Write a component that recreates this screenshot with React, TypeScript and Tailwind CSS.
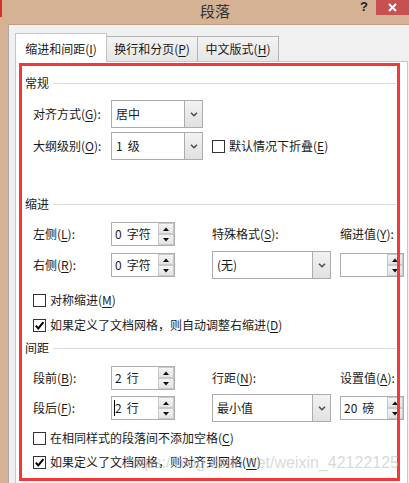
import React from "react";

// access-key letter, underlined like the Windows dialog
const K = ({ c }: { c: string }) => <span className="underline underline-offset-[2px]">{c}</span>;

function Lbl({ t, k, colon = true }: { t: string; k: string; colon?: boolean }) {
  return (
    <span className="whitespace-nowrap">
      {t}(<K c={k} />){colon ? ":" : ""}
    </span>
  );
}

// number + unit, with the wider gap the dialog font gives
function Val({ n, u }: { n: string; u: string }) {
  return (
    <span className="whitespace-nowrap">
      {n}
      <span className="ml-[5px]">{u}</span>
    </span>
  );
}

function Heading({ title }: { title: string }) {
  return (
    <div className="flex items-center h-[16px] mr-[9px]">
      <span>{title}</span>
      <div className="ml-[4px] flex-1 h-px bg-[#dcdcdc]" />
    </div>
  );
}

function Chevron() {
  return (
    <svg width="8" height="5" viewBox="0 0 8 5">
      <path d="M1 0.8 L4 3.8 L7 0.8" stroke="#4a4a4a" strokeWidth="1.5" fill="none" />
    </svg>
  );
}

function Select({ value, w }: { value: React.ReactNode; w: string }) {
  return (
    <div className={`${w} h-[28px] flex border border-[#acacac] bg-white`}>
      <div className="flex-1 flex items-center pl-[4px] whitespace-nowrap">{value}</div>
      <div className="w-[18px] border-l border-[#acacac] bg-gradient-to-b from-[#f2f2f2] to-[#e1e1e1] flex items-center justify-center">
        <Chevron />
      </div>
    </div>
  );
}

function SpinBtn({ up }: { up?: boolean }) {
  return (
    <div className="h-[11px] border border-[#c9c9c9] bg-gradient-to-b from-[#f5f5f5] to-[#e3e3e3] flex items-center justify-center">
      <svg width="6" height="4" viewBox="0 0 6 4">
        <path d={up ? "M0 4 L3 0.5 L6 4Z" : "M0 0 L6 0 L3 3.5Z"} fill="#111" />
      </svg>
    </div>
  );
}

function Spin({ children }: { children?: React.ReactNode }) {
  return (
    <div className="w-[64px] h-[24px] flex border border-[#abadb3] bg-white">
      <div className="flex-1 flex items-center pl-[3px] whitespace-nowrap">{children}</div>
      <div className="w-[16px] flex flex-col">
        <SpinBtn up />
        <SpinBtn />
      </div>
    </div>
  );
}

function Check({ checked, children }: { checked?: boolean; children: React.ReactNode }) {
  return (
    <div className="flex items-center h-[16px] gap-[4px]">
      <div className="w-[13px] h-[13px] border border-[#333] bg-white flex items-center justify-center">
        {checked && (
          <svg width="11" height="11" viewBox="0 0 11 11">
            <path d="M1.8 5.6 L4.3 8.4 L9.4 2.2" stroke="#000" strokeWidth="2" fill="none" />
          </svg>
        )}
      </div>
      <span className="whitespace-nowrap">{children}</span>
    </div>
  );
}

export default function App() {
  return (
    <div className="w-[409px] h-[483px] overflow-hidden relative bg-[#d5b293] flex flex-col font-['Noto_Sans_CJK_SC','Noto_Sans',sans-serif] text-[12px] leading-[16px] text-[#1a1a1a]">
      {/* title bar */}
      <div className="h-[24px] flex items-start shrink-0">
        <div className="w-[2px] h-[17px] bg-[#d8302f]" />
        <div className="ml-[198px] h-[22px] flex items-center text-[15px] text-[#333]">段落</div>
        <div className="flex-1" />
        <div className="mt-[1px] mr-[8px] text-[13px] leading-[12px] font-bold text-[#222] font-['Liberation_Sans',sans-serif]">?</div>
        <div className="w-[33px] h-[15px] bg-[#c75050] flex items-center justify-center">
          <svg width="9" height="9" viewBox="0 0 9 9">
            <path d="M1 1 L8 8 M8 1 L1 8" stroke="#fff" strokeWidth="2" />
          </svg>
        </div>
      </div>

      <div className="flex flex-1">
        <div className="w-[8px]" />
        <div className="flex-1 flex flex-col bg-[#f0f0f0] border-t border-l border-t-[#bb9e84] border-l-[#a8a8a8] pt-[8px] pl-[6px] pr-[1px]">
          {/* tabs */}
          <div className="flex items-end h-[28px]">
            <div className="relative z-10 -mb-px w-[92px] h-[29px] bg-white border border-b-0 border-[#c4c4c4] flex items-center justify-center pt-[1px]">
              <Lbl t="缩进和间距" k="I" colon={false} />
            </div>
            <div className="w-[91px] h-[25px] bg-gradient-to-b from-[#f3f3f3] to-[#e6e6e6] border border-b-0 border-l-0 border-[#b4b4b4] flex items-center justify-center">
              <Lbl t="换行和分页" k="P" colon={false} />
            </div>
            <div className="w-[81px] h-[25px] bg-gradient-to-b from-[#f3f3f3] to-[#e6e6e6] border border-b-0 border-l-0 border-[#b4b4b4] flex items-center justify-center">
              <Lbl t="中文版式" k="H" colon={false} />
            </div>
          </div>

          {/* panel */}
          <div className="flex-1 bg-white border border-b-0 border-[#c8c8c8] flex flex-col pl-[9px] pr-[2px] pt-[13px]">
            <Heading title="常规" />
            <div className="mt-[9px] flex items-center h-[28px] pl-[8px]">
              <div className="w-[78px]"><Lbl t="对齐方式" k="G" /></div>
              <Select value="居中" w="w-[92px]" />
            </div>
            <div className="mt-[4px] flex items-center h-[28px] pl-[8px]">
              <div className="w-[78px]"><Lbl t="大纲级别" k="O" /></div>
              <Select value={<Val n="1" u="级" />} w="w-[92px]" />
              <div className="ml-[9px]">
                <Check>
                  <Lbl t="默认情况下折叠" k="E" colon={false} />
                </Check>
              </div>
            </div>

            <div className="mt-[36px]">
              <Heading title="缩进" />
            </div>
            <div className="mt-[10px] flex items-center h-[24px] pl-[8px]">
              <div className="w-[78px]"><Lbl t="左侧" k="L" /></div>
              <Spin><Val n="0" u="字符" /></Spin>
              <div className="ml-[37px] w-[128px]"><Lbl t="特殊格式" k="S" /></div>
              <Lbl t="缩进值" k="Y" />
            </div>
            <div className="mt-[5px] flex items-center h-[28px] pl-[8px]">
              <div className="w-[78px]"><Lbl t="右侧" k="R" /></div>
              <Spin><Val n="0" u="字符" /></Spin>
              <div className="ml-[37px] w-[128px]">
                <Select value="(无)" w="w-[119px]" />
              </div>
              <Spin />
            </div>
            <div className="mt-[13px] pl-[8px]">
              <Check>
                <Lbl t="对称缩进" k="M" colon={false} />
              </Check>
            </div>
            <div className="mt-[9px] pl-[8px]">
              <Check checked>
                <Lbl t="如果定义了文档网格，则自动调整右缩进" k="D" colon={false} />
              </Check>
            </div>

            <div className="mt-[7px]">
              <Heading title="间距" />
            </div>
            <div className="mt-[10px] flex items-center h-[24px] pl-[8px]">
              <div className="w-[78px]"><Lbl t="段前" k="B" /></div>
              <Spin><Val n="2" u="行" /></Spin>
              <div className="ml-[37px] w-[128px]"><Lbl t="行距" k="N" /></div>
              <Lbl t="设置值" k="A" />
            </div>
            <div className="mt-[4px] flex items-center h-[28px] pl-[8px]">
              <div className="w-[78px]"><Lbl t="段后" k="F" /></div>
              <Spin>
                <span className="border-l border-black -ml-[1px]">
                  <Val n="2" u="行" />
                </span>
              </Spin>
              <div className="ml-[37px] w-[128px]">
                <Select value="最小值" w="w-[119px]" />
              </div>
              <Spin><Val n="20" u="磅" /></Spin>
            </div>
            <div className="mt-[8px] pl-[8px]">
              <Check>
                <Lbl t="在相同样式的段落间不添加空格" k="C" colon={false} />
              </Check>
            </div>
            <div className="mt-[8px] pl-[8px]">
              <Check checked>
                <Lbl t="如果定义了文档网格，则对齐到网格" k="W" colon={false} />
              </Check>
            </div>
          </div>
        </div>
      </div>

      {/* red annotation frame drawn over the dialog */}
      <div className="absolute left-[19px] top-[63px] w-[381px] h-[418px] border-[3px] border-[#f43838] pointer-events-none" />

      {/* blog watermark */}
      <div className="absolute right-[10px] top-[454px] text-[16px] leading-[18px] font-['Liberation_Sans',sans-serif] text-[rgba(185,185,185,0.55)] pointer-events-none whitespace-nowrap">
        https://blog.csdn.net/weixin_42122125
      </div>
    </div>
  );
}
